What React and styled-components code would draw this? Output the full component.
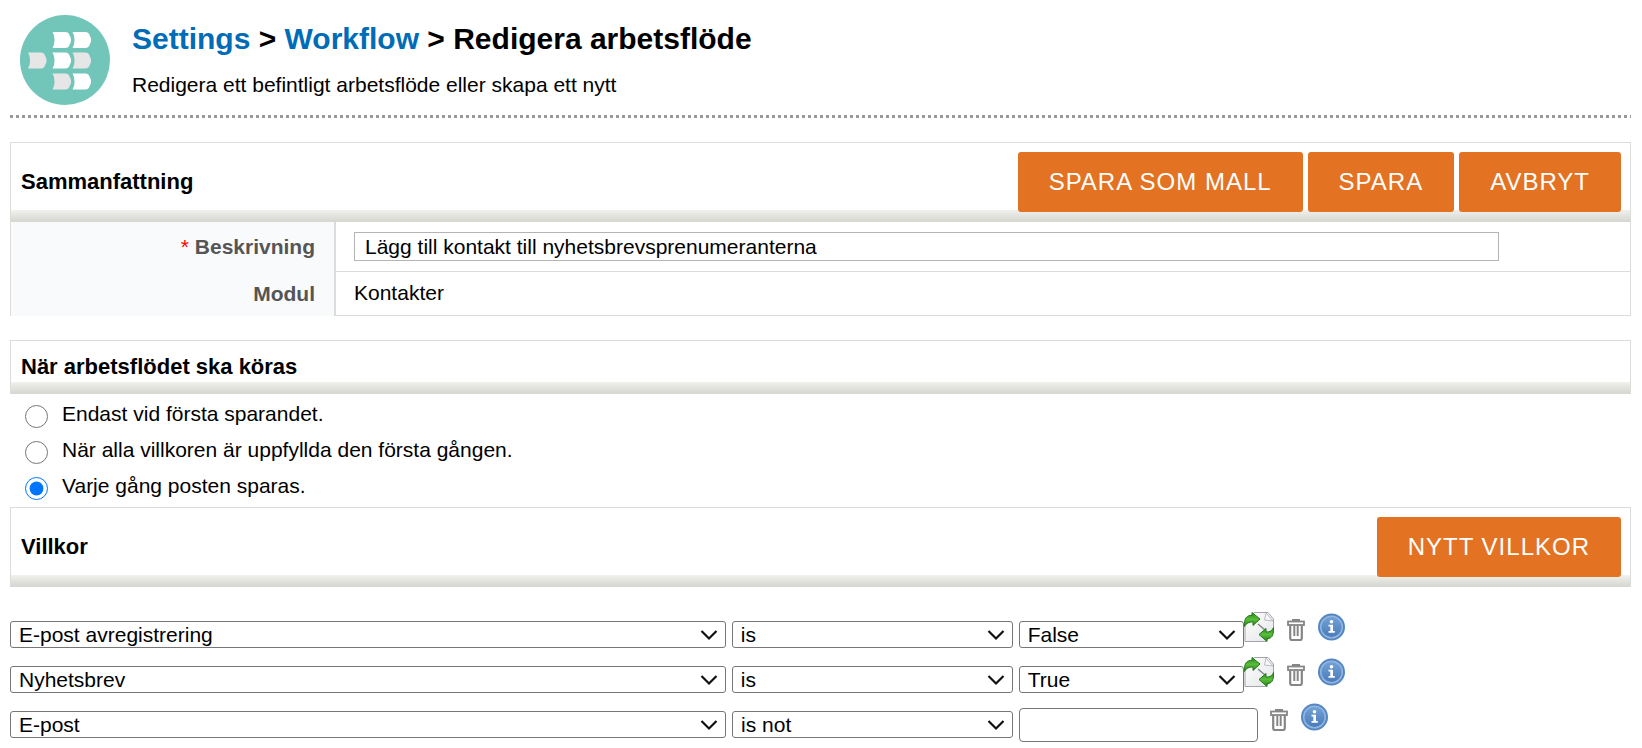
import React from "react";
import styled, { createGlobalStyle } from "styled-components";

const GlobalStyle = createGlobalStyle`
  * {
    box-sizing: border-box;
  }

  body {
    margin: 0;
    background: #fff;
    color: #000;
    font-family: "Liberation Sans", Arial, sans-serif;
    font-size: 21px;
    line-height: 30px;
  }

  input, select, button {
    font: inherit;
    color: inherit;
  }
`;

const Page = styled.div`
  padding: 0 11px 0 10px;
`;

const PageHeader = styled.header`
  display: flex;
  gap: 22px;
  padding: 15px 10px 10px;
`;

const DottedLine = styled.div`
  height: 3px;
  margin-bottom: 24px;
  background: repeating-linear-gradient(
    to right,
    #999 0,
    #999 3px,
    transparent 3px,
    transparent 6px
  );
`;

const Title = styled.h1`
  margin: 6px 0 13px;
  font-size: 30px;
  line-height: 36px;

  a {
    color: #006cb7;
    text-decoration: none;
  }
`;

const Subtitle = styled.p`
  margin: 0;
`;

const SectionHeader = styled.div`
  display: flex;
  align-items: center;
  justify-content: space-between;
  min-height: 54px;
  padding: 9px 9px 10px 10px;
  border: 1px solid #dcdcda;
  border-bottom: 0;
  background: linear-gradient(#f1f2ed, #e2e3dd 50%, #d5d6d0) bottom / 100% 12px
    no-repeat;
`;

const SectionTitle = styled.h2`
  margin: 0;
  padding-bottom: 1px;
  font-size: 22px;
  line-height: 30px;
`;

const ButtonBar = styled.div`
  display: flex;
  gap: 5px;
`;

const Button = styled.button`
  height: 60px;
  padding: 0 31px;
  border: 0;
  border-radius: 3px;
  background: #e37222;
  color: #fff;
  font-size: 24px;
  letter-spacing: 1px;
  text-transform: uppercase;
  cursor: pointer;
`;

const SummaryTable = styled.table`
  width: 100%;
  margin-bottom: 24px;
  border-spacing: 0;
  border: 1px solid #dcdcda;
  border-width: 0 1px;

  th {
    width: 325px;
    padding: 0 19px 0 0;
    border-right: 2px solid #dcdcda;
    background: #f9fafc;
    color: #555;
    text-align: right;
  }

  td {
    padding: 6px 18px 7px;
    border-bottom: 1px solid #dcdcda;
  }

  tr:first-child td {
    padding: 10px 18px;
  }
`;

const Required = styled.span`
  color: #f00;
  font-weight: normal;
`;

const DescriptionInput = styled.input`
  display: block;
  width: 91%;
  height: 29px;
  padding: 0 10px;
  border: 1px solid #b4b4b4;
`;

const RadioList = styled.div`
  padding: 5px 15px 0;
`;

const RadioRow = styled.label`
  display: flex;
  gap: 14px;
  height: 36px;

  input {
    width: 23px;
    height: 23px;
    margin: 6px 0 0;
  }
`;

const Conditions = styled.div`
  padding: 25px 0 12px;
`;

const ConditionRow = styled.div`
  display: flex;
  height: 45px;
`;

const Fields = styled.div`
  display: flex;
  align-items: center;
  gap: 6px;
  width: ${props => (props.$wide ? "77%" : "76.1%")};
`;

const SelectBox = styled.div`
  position: relative;
  flex: ${props => props.$size} 1 ${props => props.$size}px;
  height: 27px;

  select {
    display: block;
    appearance: none;
    width: 100%;
    height: 27px;
    padding: 0 30px 0 8px;
    border: 1px solid #767676;
    border-radius: 3px;
    background: #fff;
    line-height: 25px;
  }

  svg {
    position: absolute;
    top: 8px;
    right: 8px;
    pointer-events: none;
  }
`;

const ValueInput = styled.input`
  flex: 239 1 239px;
  min-width: 0;
  height: 34px;
  padding: 0 8px;
  border: 1px solid #767676;
  border-radius: 4px;
`;

const IconBar = styled.div`
  display: flex;
  align-items: flex-start;
`;

const IconButton = styled.button`
  display: block;
  height: 30px;
  padding: 0;
  margin-left: ${props => props.$gap || 0}px;
  border: 0;
  background: none;
  cursor: pointer;

  svg {
    display: block;
  }
`;

const runOptions = [
  "Endast vid första sparandet.",
  "När alla villkoren är uppfyllda den första gången.",
  "Varje gång posten sparas."
];

const conditions = [
  { field: "E-post avregistrering", operator: "is", value: "False" },
  { field: "Nyhetsbrev", operator: "is", value: "True" },
  { field: "E-post", operator: "is not", value: null }
];

const fieldNames = ["E-post avregistrering", "Nyhetsbrev", "E-post"];

function Block({ x, y, fill }) {
  return (
    <path
      transform={`translate(${x} ${y})`}
      d="M0 0H13Q16 0 17 3L18.500 6.500V9.500L17 13Q16 16 13 16H0L1.500 12.500Q2.500 8 1.500 3.500Z"
      fill={fill}
    />
  );
}

function WorkflowIcon() {
  return (
    <svg width="90" height="90" viewBox="0 0 90 90" aria-hidden="true">
      <circle cx="45" cy="45" r="45" fill="#72c6b9" />
      <Block x={32.5} y={17} fill="#fff" />
      <Block x={52.5} y={17} fill="#fff" />
      <Block x={8} y={37.5} fill="#e6e6e6" />
      <Block x={32.5} y={37.5} fill="#fff" />
      <Block x={52.5} y={37.5} fill="#e6e6e6" />
      <Block x={32.5} y={58.5} fill="#e6e6e6" />
      <Block x={52.5} y={58.5} fill="#fff" />
    </svg>
  );
}

function RefreshIcon() {
  return (
    <svg width="30" height="30" viewBox="0 0 30 30">
      <defs>
        <linearGradient id="sheet" x1="0" y1="0" x2="1" y2="1">
          <stop offset="0" stopColor="#fff" />
          <stop offset="1" stopColor="#e4e5e8" />
        </linearGradient>
        <linearGradient id="arrow" x1="0" y1="0" x2="0" y2="1">
          <stop offset="0" stopColor="#2f8a1c" />
          <stop offset="0.500" stopColor="#58bd3a" />
          <stop offset="1" stopColor="#2a7f19" />
        </linearGradient>
      </defs>
      <path
        d="M1 10L10 0.500H24L29.500 7V20L22 29.500H1Z"
        fill="url(#sheet)"
        stroke="#a2a5ac"
      />
      <path d="M22 1L20.500 8L29 9Z" fill="#f7f7f8" stroke="#b9bcc2" />
      <path d="M14 12L21 18" stroke="#85878d" strokeWidth="1.500" />
      <path
        d="M0.500 14.500C0 6 3 3 8 3.500V0.500L16 7L9 13.500V10C5 10 2.500 11 0.500 14.500Z"
        fill="url(#arrow)"
        stroke="#23771a"
      />
      <path
        d="M29.500 15.500C30 24 27 27 23 26.500V29.500L15 22.500L22 16.500V20C26 20 28 19 29.500 15.500Z"
        fill="url(#arrow)"
        stroke="#23771a"
      />
    </svg>
  );
}

function TrashIcon() {
  return (
    <svg width="18" height="30" viewBox="0 0 18 30">
      <g fill="none" stroke="#868686">
        <path d="M6 9V8H12V9" strokeWidth="2" />
        <rect x="1" y="9.500" width="16" height="3.500" strokeWidth="1.800" />
        <path
          d="M3.200 13V26Q3.200 28 5 28H13Q14.800 28 14.800 26V13"
          strokeWidth="2.200"
        />
        <path d="M7.300 14V24M10.700 14V24" strokeWidth="2" />
      </g>
    </svg>
  );
}

function InfoIcon() {
  return (
    <svg width="27" height="30" viewBox="0 0 27 30">
      <defs>
        <linearGradient id="info" x1="0" y1="0" x2="0" y2="1">
          <stop offset="0" stopColor="#74a3d6" />
          <stop offset="1" stopColor="#4a7ab8" />
        </linearGradient>
      </defs>
      <circle cx="13.500" cy="15" r="13.500" fill="#5586c2" />
      <circle
        cx="13.500"
        cy="15"
        r="10.800"
        fill="url(#info)"
        stroke="#8fb5e0"
        strokeWidth="1.500"
      />
      <circle cx="13.500" cy="9.800" r="1.800" fill="#fff" />
      <path
        d="M10.500 12.800H15V19H16.800V20.800H10.500V19H12.300V14.500H10.500Z"
        fill="#fff"
      />
    </svg>
  );
}

function Select({ size, value, options, label }) {
  return (
    <SelectBox $size={size}>
      <select defaultValue={value} aria-label={label}>
        {options.map(option => (
          <option key={option}>{option}</option>
        ))}
      </select>
      <svg width="18" height="12" viewBox="0 0 18 12" aria-hidden="true">
        <path
          d="M1.500 2L9 9.500L16.500 2"
          fill="none"
          stroke="#111"
          strokeWidth="2.200"
        />
      </svg>
    </SelectBox>
  );
}

function Condition({ field, operator, value }) {
  const isText = value === null;
  return (
    <ConditionRow>
      <Fields $wide={isText}>
        <Select size={716} value={field} options={fieldNames} label="Fält" />
        <Select
          size={281}
          value={operator}
          options={["is", "is not"]}
          label="Operator"
        />
        {isText ? (
          <ValueInput type="text" aria-label="Värde" />
        ) : (
          <Select
            size={225}
            value={value}
            options={["True", "False"]}
            label="Värde"
          />
        )}
      </Fields>
      <IconBar>
        {!isText && (
          <IconButton type="button" aria-label="Uppdatera">
            <RefreshIcon />
          </IconButton>
        )}
        <IconButton
          type="button"
          $gap={isText ? 12 : 13}
          aria-label="Ta bort"
        >
          <TrashIcon />
        </IconButton>
        <IconButton type="button" $gap={13} aria-label="Information">
          <InfoIcon />
        </IconButton>
      </IconBar>
    </ConditionRow>
  );
}

export default function App() {
  return (
    <Page>
      <GlobalStyle />
      <PageHeader>
        <WorkflowIcon />
        <div>
          <Title>
            <a href="#settings">Settings</a> &gt;{" "}
            <a href="#workflow">Workflow</a> &gt; Redigera arbetsflöde
          </Title>
          <Subtitle>
            Redigera ett befintligt arbetsflöde eller skapa ett nytt
          </Subtitle>
        </div>
      </PageHeader>
      <DottedLine />

      <SectionHeader>
        <SectionTitle>Sammanfattning</SectionTitle>
        <ButtonBar>
          <Button type="button">Spara som mall</Button>
          <Button type="button">Spara</Button>
          <Button type="button">Avbryt</Button>
        </ButtonBar>
      </SectionHeader>
      <SummaryTable>
        <tbody>
          <tr>
            <th scope="row">
              <Required>*</Required>{" "}
              <label htmlFor="description">Beskrivning</label>
            </th>
            <td>
              <DescriptionInput
                id="description"
                type="text"
                defaultValue="Lägg till kontakt till nyhetsbrevsprenumeranterna"
              />
            </td>
          </tr>
          <tr>
            <th scope="row">Modul</th>
            <td>Kontakter</td>
          </tr>
        </tbody>
      </SummaryTable>

      <SectionHeader>
        <SectionTitle>När arbetsflödet ska köras</SectionTitle>
      </SectionHeader>
      <RadioList>
        {runOptions.map((option, i) => (
          <RadioRow key={option}>
            <input type="radio" name="run" defaultChecked={i === 2} />
            {option}
          </RadioRow>
        ))}
      </RadioList>

      <SectionHeader>
        <SectionTitle>Villkor</SectionTitle>
        <Button type="button">Nytt villkor</Button>
      </SectionHeader>
      <Conditions>
        {conditions.map(condition => (
          <Condition key={condition.field} {...condition} />
        ))}
      </Conditions>
    </Page>
  );
}
